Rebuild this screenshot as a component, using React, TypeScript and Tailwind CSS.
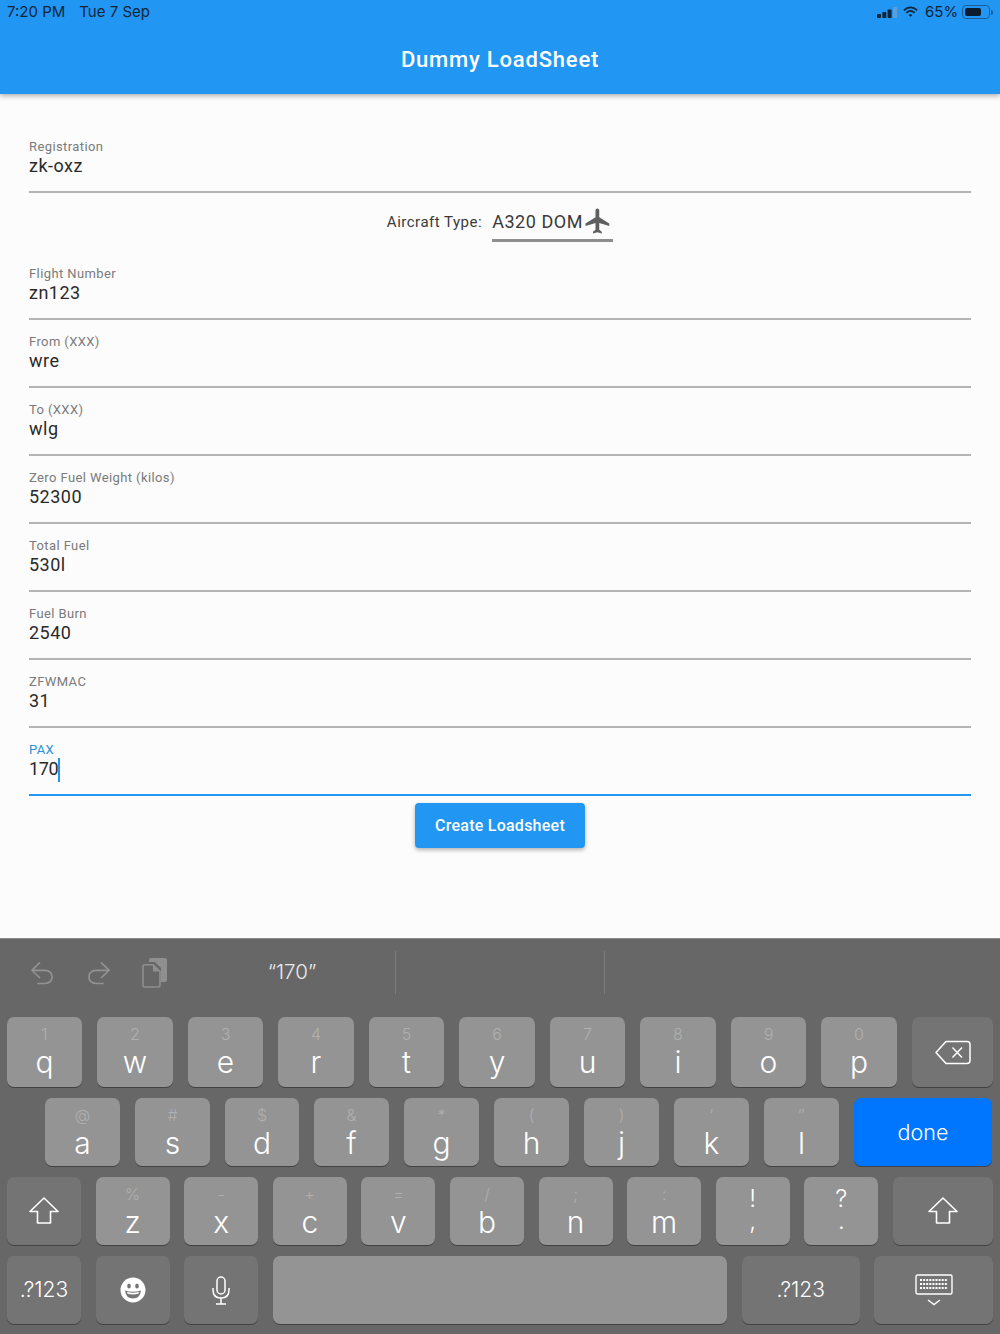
import type { ReactNode } from "react"

const keyFont = "font-['Inter',sans-serif]"

function Field({ label, value, active }: { label: string; value: string; active?: boolean }) {
  return (
    <div className={`h-[68px] pt-[14px] border-b-2 ${active ? "border-[#2196f3]" : "border-[#b4b4b4]"}`}>
      <div className={`text-[13px] leading-[16px] tracking-[0.4px] ${active ? "text-[#2a93d5]" : "text-[#7a7a7a]"}`}>{label}</div>
      <div className={`-mt-px flex items-center h-[24px] text-[18px] leading-[24px] text-[#2a2a2a] ${active ? "tracking-[-0.4px]" : "tracking-[0.5px]"}`}>
        {value}
        {active && <span className="mt-[2px] w-[2px] h-[24px] bg-[#2196f3]" />}
      </div>
    </div>
  )
}

function Key({ main, sub, className = "w-[75px]" }: { main: string; sub: string; className?: string }) {
  return (
    <div className={`${className} h-full bg-[#949494] rounded-[7px] shadow-[0_1px_0_#424242] flex flex-col items-center pt-[8px] text-white`}>
      <div className="h-[19px] text-[16px] leading-[19px] font-light text-[#b0b0b0]">{sub}</div>
      <div className="h-[37px] text-[30px] leading-[37px] font-light">{main}</div>
    </div>
  )
}

function Special({ children, className, blue }: { children: ReactNode; className: string; blue?: boolean }) {
  return (
    <div className={`${className} h-full rounded-[7px] shadow-[0_1px_0_#424242] flex items-center justify-center text-white ${blue ? "bg-[#0076ff]" : "bg-[#747474]"}`}>
      {children}
    </div>
  )
}

function ShiftIcon() {
  return (
    <svg className="-mt-[2px]" width="30" height="27" viewBox="0 0 30 27" fill="none" stroke="white" strokeWidth="1.6" strokeLinejoin="round">
      <path d="M15 1 L29 14.5 H21.5 V26 H8.5 V14.5 H1 Z" />
    </svg>
  )
}

const row1: [string, string, string][] = [
  ["q", "1", "w-[75px]"], ["w", "2", "w-[76px]"], ["e", "3", "w-[75px]"], ["r", "4", "w-[76px]"], ["t", "5", "w-[75px]"],
  ["y", "6", "w-[76px]"], ["u", "7", "w-[75px]"], ["i", "8", "w-[76px]"], ["o", "9", "w-[75px]"], ["p", "0", "w-[76px]"],
]
const row2: [string, string, string][] = [
  ["a", "@", "w-[75px]"], ["s", "#", "w-[75px]"], ["d", "$", "w-[74px]"], ["f", "&", "w-[75px]"], ["g", "*", "w-[75px]"],
  ["h", "(", "w-[75px]"], ["j", ")", "w-[75px]"], ["k", "′", "w-[75px]"], ["l", "″", "w-[75px]"],
]
const row3: [string, string][] = [["z", "%"], ["x", "-"], ["c", "+"], ["v", "="], ["b", "/"], ["n", ";"], ["m", ":"]]

export default function App() {
  return (
    <div className="h-[1334px] flex flex-col bg-[#fcfcfc] font-['Roboto',sans-serif] overflow-hidden">
      <header className="relative z-10 h-[94px] shrink-0 flex flex-col bg-[#2196f3] shadow-[0_2px_5px_rgba(0,0,0,0.3)]">
        <div className={`h-[24px] flex items-center justify-between pl-[7px] pr-[7px] text-[15px] text-[#10253a] ${keyFont}`}>
          <div className="flex gap-[14px]">
            <span>7:20 PM</span>
            <span>Tue 7 Sep</span>
          </div>
          <div className="flex items-center">
            <svg width="20" height="11" viewBox="0 0 20 11" fill="#10253a">
              <rect x="0" y="7" width="4" height="4" rx="0.7" />
              <rect x="5.3" y="5" width="4" height="6" rx="0.7" />
              <rect x="10.6" y="2.5" width="4" height="8.5" rx="0.7" />
              <rect x="16" y="0" width="4" height="11" rx="0.7" fill="#5f9fd8" />
            </svg>
            <svg className="ml-[6px]" width="15" height="12" viewBox="0 0 17 13" fill="none" stroke="#10253a" strokeWidth="2">
              <path d="M1 4.6 C5.5 0.2 11.5 0.2 16 4.6" />
              <path d="M3.8 7.4 C6.6 4.8 10.4 4.8 13.2 7.4" />
              <path d="M6.4 10 L8.5 12 L10.6 10 C9.4 8.9 7.6 8.9 6.4 10 Z" fill="#10253a" stroke="none" />
            </svg>
            <span className="ml-[7px] w-[32px]">65%</span>
            <div className="ml-[5px] w-[28px] h-[14px] rounded-[4px] border border-[#1d5f9c] p-[2px]">
              <div className="w-[16px] h-full rounded-[2px] bg-[#0c1c2c]" />
            </div>
            <div className="ml-[1px] w-[2px] h-[5px] rounded-r-[2px] bg-[#1d5f9c]" />
          </div>
        </div>
        <div className="flex-1 flex items-center justify-center text-white text-[22px] font-medium tracking-[0.8px]">
          Dummy LoadSheet
        </div>
      </header>

      <main className="flex-1 pt-[31px] px-[29px]">
        <Field label="Registration" value="zk-oxz" />
        <div className="h-[59px] flex justify-center items-start pt-[5px]">
          <div className="flex items-center h-[43px] text-[15px] tracking-[0.5px] text-[#3a3a3a] pt-[5px]">Aircraft Type:</div>
          <div className="ml-[10px] w-[121px] h-[44px] flex items-center pt-[5px] border-b-[3px] border-[#8e8e8e] text-[18px] tracking-[0.55px] text-[#3a3a3a]">
            <span>A320 DOM</span>
            <svg className="-mt-[1px]" width="30" height="30" viewBox="0 0 24 24" fill="#5f5f5f">
              <path d="M21 16v-2l-8-5V3.5c0-.83-.67-1.5-1.5-1.5S10 2.67 10 3.5V9l-8 5v2l8-2.5V19l-2 1.5V22l3.5-1 3.5 1v-1.5L13 19v-5.5l8 2.5z" />
            </svg>
          </div>
        </div>
        <Field label="Flight Number" value="zn123" />
        <Field label="From (XXX)" value="wre" />
        <Field label="To (XXX)" value="wlg" />
        <Field label="Zero Fuel Weight (kilos)" value="52300" />
        <Field label="Total Fuel" value="530l" />
        <Field label="Fuel Burn" value="2540" />
        <Field label="ZFWMAC" value="31" />
        <Field label="PAX" value="170" active />
        <div className="flex justify-center mt-[7px]">
          <button className="w-[170px] h-[45px] rounded-[4px] bg-[#2196f3] text-white text-[16px] font-medium tracking-[0.25px] shadow-[0_2px_4px_rgba(0,0,0,0.3)]">
            Create Loadsheet
          </button>
        </div>
      </main>

      <div className={`h-[396px] shrink-0 bg-[#676767] border-t border-[#8c8c8c] ${keyFont}`}>
        <div className="h-[78px] flex items-center pl-[31px] pb-[11px]">
          <svg width="24" height="24" viewBox="0 0 24 24" fill="none" stroke="#929292" strokeWidth="1.7">
            <path d="M9 1.3 L0.9 9.3 L9 17 M0.9 9.3 H14 C23.5 9.3 23.5 22.5 14 22.5 H6.3" />
          </svg>
          <svg className="ml-[31px]" width="24" height="24" viewBox="0 0 24 24" fill="none" stroke="#929292" strokeWidth="1.7">
            <path d="M15 1.3 L23.1 9.3 L15 17 M23.1 9.3 H10 C0.5 9.3 0.5 22.5 10 22.5 H17.7" />
          </svg>
          <svg className="ml-[32px]" width="25" height="30" viewBox="0 0 25 30">
            <path d="M7 2 Q7 0 9 0 H23 Q25 0 25 2 V22 Q25 24 23 24 H19 V10 L13 4 H7 Z" fill="#8f8f8f" />
            <path d="M1 8 Q1 6.8 2.2 6.8 H11 L18 13.5 V27.5 Q18 29 16.5 29 H2.5 Q1 29 1 27.5 Z" fill="none" stroke="#8f8f8f" strokeWidth="1.6" />
            <path d="M11 7 V13.5 H18 Z" fill="#8f8f8f" />
          </svg>
          <div className="w-[228px] pl-[22px] text-center text-[20.5px] font-light text-[#ececec]">“170”</div>
          <div className="w-px h-[43px] bg-[#7d7d7d]" />
          <div className="w-[208px]" />
          <div className="w-px h-[43px] bg-[#7d7d7d]" />
        </div>

        <div className="h-[70px] flex gap-[15px] pl-[7px]">
          {row1.map(([m, s, w]) => (
            <Key key={m} main={m} sub={s} className={w} />
          ))}
          <Special className="w-[81px]">
            <svg width="36" height="25" viewBox="0 0 36 25" fill="none" stroke="white" strokeWidth="1.5" strokeLinejoin="round">
              <path d="M1 12.5 L11 1.5 H32 Q35 1.5 35 4.5 V20.5 Q35 23.5 32 23.5 H11 Z" />
              <path d="M17.5 7.5 L27 17.5 M27 7.5 L17.5 17.5" />
            </svg>
          </Special>
        </div>

        <div className="h-[68px] mt-[11px] flex gap-[15px] pl-[45px]">
          {row2.map(([m, s, w]) => (
            <Key key={m} main={m} sub={s} className={w} />
          ))}
          <Special className="w-[138px] text-[21.5px] font-light" blue>done</Special>
        </div>

        <div className="h-[68px] mt-[11px] flex gap-[14.6px] pl-[7px] pr-[7px]">
          <Special className="w-[74px]"><ShiftIcon /></Special>
          {row3.map(([m, s]) => (
            <Key key={m} main={m} sub={s} className="w-[74px]" />
          ))}
          <div className="w-[74px] h-full bg-[#949494] rounded-[7px] shadow-[0_1px_0_#424242] pt-[11px] text-center text-white font-light text-[24px] leading-[22px] whitespace-pre-line">
            {"!\n,"}
          </div>
          <div className="w-[74px] h-full bg-[#949494] rounded-[7px] shadow-[0_1px_0_#424242] pt-[11px] text-center text-white font-light text-[24px] leading-[22px] whitespace-pre-line">
            {"?\n."}
          </div>
          <Special className="flex-1"><ShiftIcon /></Special>
        </div>

        <div className="h-[68px] mt-[11px] flex gap-[14.7px] pl-[7px] pr-[7px]">
          <Special className="w-[74px] text-[21px] font-light">.?123</Special>
          <Special className="w-[74px]">
            <svg width="26" height="26" viewBox="0 0 26 26">
              <circle cx="13" cy="13" r="12.5" fill="white" />
              <ellipse cx="9" cy="9" rx="1.8" ry="2.6" fill="#747474" />
              <ellipse cx="17" cy="9" rx="1.8" ry="2.6" fill="#747474" />
              <path d="M5 13.5 Q13 16 21 13.5 Q20 21.5 13 21.5 Q6 21.5 5 13.5 Z" fill="#747474" />
              <path d="M7 15 Q13 16.6 19 15 L18.5 16.8 Q13 18 7.5 16.8 Z" fill="white" />
            </svg>
          </Special>
          <Special className="w-[74px]">
            <svg width="18" height="29" viewBox="0 0 18 29" fill="none" stroke="white" strokeWidth="1.5">
              <rect x="5" y="1" width="8" height="17" rx="4" />
              <path d="M1 12 V14 Q1 22 9 22 Q17 22 17 14 V12 M9 22 V28 M4 28 H14" />
            </svg>
          </Special>
          <div className="w-[454px] h-full rounded-[7px] bg-[#949494] shadow-[0_1px_0_#424242]" />
          <Special className="w-[118px] text-[21px] font-light">.?123</Special>
          <Special className="flex-1">
            <svg width="38" height="32" viewBox="0 0 38 32" fill="none" stroke="white">
              <rect x="1" y="1" width="36" height="19" rx="1.5" strokeWidth="1.4" />
              <path d="M5 6 H33 M5 10 H33 M5 14 H33" strokeWidth="2" strokeDasharray="2 1.1" />
              <path d="M13 26 L19 30.5 L25 26" strokeWidth="1.4" />
            </svg>
          </Special>
        </div>
      </div>
    </div>
  )
}
